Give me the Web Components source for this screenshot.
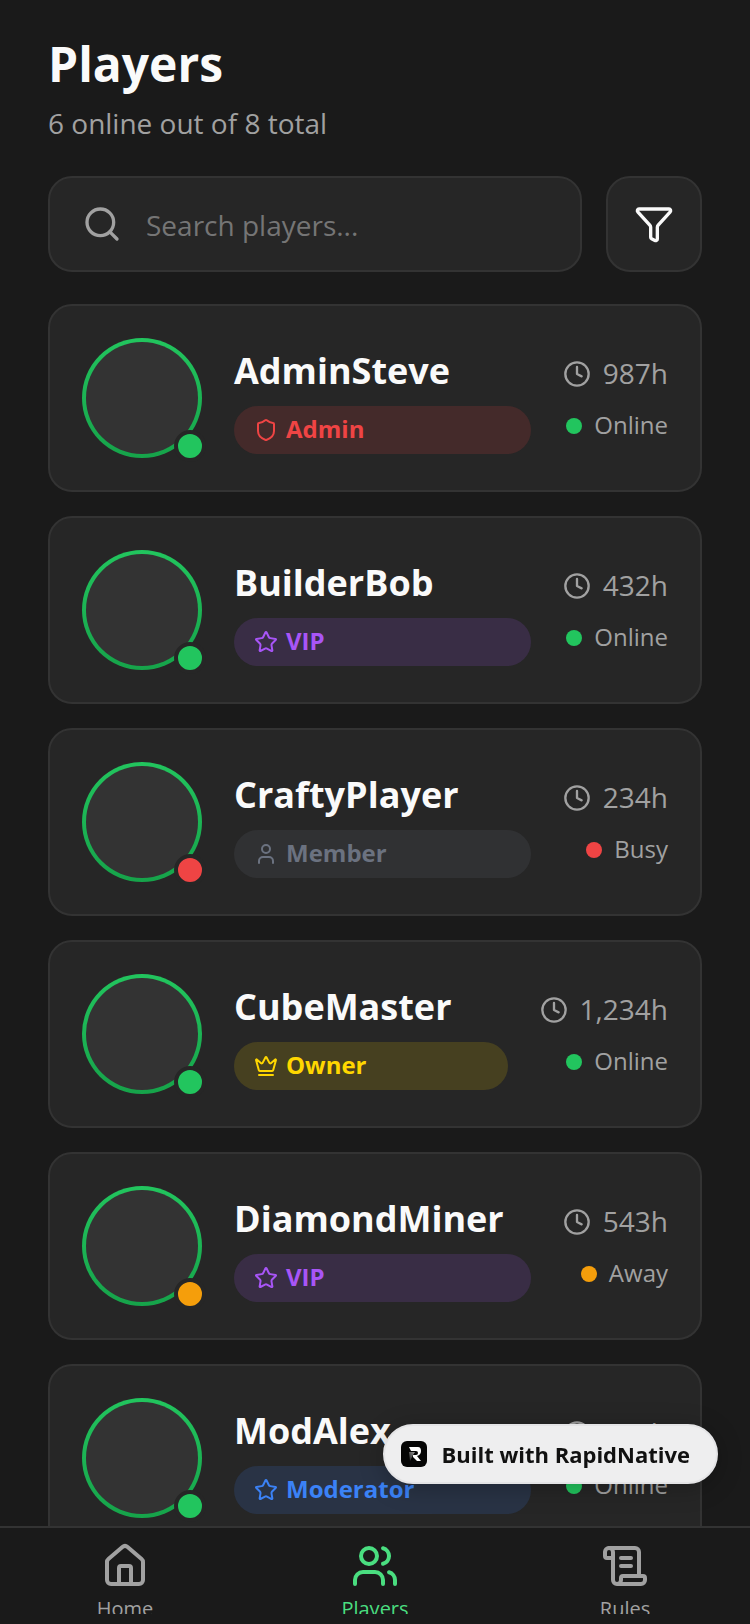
<!DOCTYPE html>
<html lang="en">
<head>
<meta charset="utf-8">
<meta name="viewport" content="width=device-width, initial-scale=1">
<title>Players</title>
<style>
    :root {
        --background: #1a1a1a;
        --card: #262626;
        --border: #333333;
        --foreground: #fafafa;
        --muted: #a1a1a1;
        --primary: #4ade80;
        --online: #22c55e;
        --busy: #ef4444;
        --away: #f59e0b;
    }

    body {
        margin: 0;
        background: var(--background);
        color: var(--foreground);
        font-family: "Open Sans", "Noto Sans", sans-serif;
    }
</style>
</head>
<body>
<players-screen>
    <player-card name="AdminSteve" role-name="Admin" hours="987h" status="online"></player-card>
    <player-card name="BuilderBob" role-name="VIP" hours="432h" status="online"></player-card>
    <player-card name="CraftyPlayer" role-name="Member" hours="234h" status="busy"></player-card>
    <player-card name="CubeMaster" role-name="Owner" hours="1,234h" status="online"></player-card>
    <player-card name="DiamondMiner" role-name="VIP" hours="543h" status="away"></player-card>
    <player-card name="ModAlex" role-name="Moderator" hours="756h" status="online"></player-card>

    <nav-tab slot="tabs" icon="home" href="#home">Home</nav-tab>
    <nav-tab slot="tabs" icon="users" href="#players" active>Players</nav-tab>
    <nav-tab slot="tabs" icon="scroll" href="#rules">Rules</nav-tab>
</players-screen>
<built-badge>Built with RapidNative</built-badge>

<script>
const ICONS = {
    search: `<circle cx="11" cy="11" r="8"/><path d="m21 21-4.3-4.3"/>`,
    filter: `<path d="M10 20a1 1 0 0 0 .553.895l2 1A1 1 0 0 0 14 21v-7a2 2 0 0 1 .517-1.341L21.74 4.67A1 1 0 0 0 21 3H3a1 1 0 0 0-.742 1.67l7.225 7.989A2 2 0 0 1 10 14z"/>`,
    clock: `<circle cx="12" cy="12" r="10"/><path d="M12 6v6l4 2"/>`,
    shield: `<path d="M20 13c0 5-3.5 7.5-7.66 8.95a1 1 0 0 1-.67-.01C7.5 20.5 4 18 4 13V6a1 1 0 0 1 1-1c2 0 4.5-1.2 6.24-2.72a1.17 1.17 0 0 1 1.52 0C14.51 3.81 17 5 19 5a1 1 0 0 1 1 1z"/>`,
    star: `<path d="M11.525 2.295a.53.53 0 0 1 .95 0l2.31 4.679a2.123 2.123 0 0 0 1.595 1.16l5.166.756a.53.53 0 0 1 .294.904l-3.736 3.638a2.123 2.123 0 0 0-.611 1.878l.882 5.14a.53.53 0 0 1-.771.56l-4.618-2.428a2.122 2.122 0 0 0-1.973 0L6.396 21.01a.53.53 0 0 1-.77-.56l.881-5.139a2.122 2.122 0 0 0-.611-1.879L2.16 9.795a.53.53 0 0 1 .294-.906l5.165-.755a2.122 2.122 0 0 0 1.597-1.16z"/>`,
    user: `<path d="M19 21v-2a4 4 0 0 0-4-4H9a4 4 0 0 0-4 4v2"/><circle cx="12" cy="7" r="4"/>`,
    crown: `<path d="M11.562 3.266a.5.5 0 0 1 .876 0L15.39 8.87a1 1 0 0 0 1.516.294L21.183 5.5a.5.5 0 0 1 .798.519l-2.834 10.246a1 1 0 0 1-.956.734H5.81a1 1 0 0 1-.957-.734L2.02 6.02a.5.5 0 0 1 .798-.519l4.276 3.664a1 1 0 0 0 1.516-.294z"/><path d="M5 21h14"/>`,
    home: `<path d="M15 21v-8a1 1 0 0 0-1-1h-4a1 1 0 0 0-1 1v8"/><path d="M3 10a2 2 0 0 1 .709-1.528l7-5.999a2 2 0 0 1 2.582 0l7 5.999A2 2 0 0 1 21 10v9a2 2 0 0 1-2 2H5a2 2 0 0 1-2-2z"/>`,
    users: `<path d="M16 21v-2a4 4 0 0 0-4-4H6a4 4 0 0 0-4 4v2"/><circle cx="9" cy="7" r="4"/><path d="M22 21v-2a4 4 0 0 0-3-3.87"/><path d="M16 3.13a4 4 0 0 1 0 7.75"/>`,
    scroll: `<path d="M15 12h-5"/><path d="M15 8h-5"/><path d="M19 17V5a2 2 0 0 0-2-2H4"/><path d="M8 21h12a2 2 0 0 0 2-2v-1a1 1 0 0 0-1-1H11a1 1 0 0 0-1 1v1a2 2 0 1 1-4 0V5a2 2 0 1 0-4 0v2a1 1 0 0 0 1 1h3"/>`
};

const ROLES = {
    Admin: {icon: "shield", color: "#ef4444"},
    VIP: {icon: "star", color: "#a855f7"},
    Member: {icon: "user", color: "#6b7280"},
    Owner: {icon: "crown", color: "#ffd700"},
    Moderator: {icon: "star", color: "#3b82f6"}
};

const STATUSES = {online: "Online", busy: "Busy", away: "Away"};

// Stroke icon, takes its colour from the text around it
class LineIcon extends HTMLElement {
    connectedCallback() {
        const shadow = this.attachShadow({mode: "open"});
        const size = this.getAttribute("size") || 24;

        shadow.innerHTML = `
            <style>
                :host {
                    display: block;
                    flex: none;
                }

                svg {
                    display: block;
                    fill: none;
                    stroke: currentColor;
                    stroke-width: 2;
                    stroke-linecap: round;
                    stroke-linejoin: round;
                }
            </style>

            <svg width="${size}" height="${size}" viewBox="0 0 24 24" aria-hidden="true">${ICONS[this.getAttribute("name")]}</svg>
        `;
    }
}

class SearchBar extends HTMLElement {
    connectedCallback() {
        const shadow = this.attachShadow({mode: "open"});

        shadow.innerHTML = `
            <style>
                :host {
                    display: flex;
                    gap: 24px;
                }

                .field, button {
                    box-sizing: border-box;
                    height: 96px;
                    background: var(--card);
                    border: 2px solid var(--border);
                    border-radius: 24px;
                }

                .field {
                    flex: 1;
                    display: flex;
                    align-items: center;
                    gap: 24px;
                    min-width: 0;
                    padding: 0 32px;
                    color: var(--muted);
                }

                input {
                    flex: 1;
                    min-width: 0;
                    padding: 2px 0 0;
                    border: 0;
                    outline: 0;
                    background: none;
                    color: var(--foreground);
                    font: 28px/40px "Open Sans", "Noto Sans", sans-serif;
                }

                input::placeholder {
                    color: #757575;
                }

                button {
                    flex: none;
                    display: flex;
                    align-items: center;
                    justify-content: center;
                    width: 96px;
                    padding: 0;
                    color: var(--foreground);
                }
            </style>

            <label class="field">
                <line-icon name="search" size="40"></line-icon>
                <input type="text" placeholder="Search players..." aria-label="Search players">
            </label>
            <button type="button" aria-label="Filter"><line-icon name="filter" size="40"></line-icon></button>
        `;
    }
}

class RoleBadge extends HTMLElement {
    connectedCallback() {
        const shadow = this.attachShadow({mode: "open"});
        const role = this.getAttribute("role-name");
        const {icon, color} = ROLES[role];

        shadow.innerHTML = `
            <style>
                :host {
                    display: flex;
                    align-items: center;
                    gap: 8px;
                    padding: 8px 20px;
                    border-radius: 24px;
                    background: ${color}26;
                    color: ${color};
                    font-size: 24px;
                    line-height: 30px;
                    font-weight: 700;
                }

                span {
                    padding-bottom: 2px;
                }
            </style>

            <line-icon name="${icon}" size="24"></line-icon>
            <span>${role}</span>
        `;
    }
}

class PlayerCard extends HTMLElement {
    connectedCallback() {
        const shadow = this.attachShadow({mode: "open"});
        const status = this.getAttribute("status");

        shadow.innerHTML = `
            <style>
                :host {
                    display: flex;
                    align-items: center;
                    gap: 32px;
                    padding: 32px;
                    background: var(--card);
                    border: 2px solid var(--border);
                    border-radius: 24px;
                    --status: var(--${status});
                }

                .avatar {
                    position: relative;
                    flex: none;
                    box-sizing: border-box;
                    width: 120px;
                    height: 120px;
                    padding: 4px;
                    border-radius: 50%;
                    background: linear-gradient(#22c55e, #16a34a);
                }

                .picture {
                    height: 100%;
                    border-radius: 50%;
                    background: var(--border);
                }

                .presence {
                    position: absolute;
                    right: -4px;
                    bottom: -4px;
                    width: 24px;
                    height: 24px;
                    border: 4px solid var(--card);
                    border-radius: 50%;
                    background: var(--status);
                }

                .info {
                    flex: 1;
                    min-width: 0;
                }

                h2 {
                    margin: 0 0 6px;
                    font-size: 36px;
                    line-height: 58px;
                    font-weight: 700;
                }

                .stats {
                    display: flex;
                    flex-direction: column;
                    align-items: flex-end;
                    gap: 16px;
                    color: var(--muted);
                }

                .stats div {
                    display: flex;
                    align-items: center;
                    gap: 12px;
                }

                .stats span {
                    padding-bottom: 2px;
                }

                .hours {
                    font-size: 28px;
                    line-height: 38px;
                }

                .status {
                    font-size: 24px;
                    line-height: 30px;
                }

                .dot {
                    width: 16px;
                    height: 16px;
                    border-radius: 50%;
                    background: var(--status);
                }
            </style>

            <div class="avatar">
                <div class="picture"></div>
                <div class="presence"></div>
            </div>
            <div class="info">
                <h2>${this.getAttribute("name")}</h2>
                <role-badge role-name="${this.getAttribute("role-name")}"></role-badge>
            </div>
            <div class="stats">
                <div class="hours"><line-icon name="clock" size="28"></line-icon><span>${this.getAttribute("hours")}</span></div>
                <div class="status"><i class="dot"></i><span>${STATUSES[status]}</span></div>
            </div>
        `;
    }
}

class NavTab extends HTMLElement {
    connectedCallback() {
        const shadow = this.attachShadow({mode: "open"});

        shadow.innerHTML = `
            <style>
                :host {
                    flex: 1;
                    color: var(--muted);
                }

                :host([active]) {
                    color: var(--primary);
                }

                a {
                    display: flex;
                    flex-direction: column;
                    align-items: center;
                    gap: 4px;
                    padding-top: 14px;
                    color: inherit;
                    font-size: 20px;
                    line-height: 30px;
                    text-decoration: none;
                }
            </style>

            <a href="${this.getAttribute("href")}">
                <line-icon name="${this.getAttribute("icon")}" size="48"></line-icon>
                <slot></slot>
            </a>
        `;
    }
}

class PlayersScreen extends HTMLElement {
    connectedCallback() {
        const shadow = this.attachShadow({mode: "open"});

        shadow.innerHTML = `
            <style>
                :host {
                    display: flex;
                    flex-direction: column;
                    height: 100vh;
                }

                main {
                    flex: 1;
                    min-height: 0;
                    overflow: hidden;
                    padding: 32px 48px 0;
                }

                h1 {
                    margin: 0 0 8px;
                    font-size: 48px;
                    line-height: 64px;
                    font-weight: 700;
                }

                p {
                    margin: 0 0 34px;
                    color: var(--muted);
                    font-size: 28px;
                    line-height: 38px;
                }

                .list {
                    display: flex;
                    flex-direction: column;
                    gap: 24px;
                    margin-top: 32px;
                }

                footer {
                    flex: none;
                    padding-bottom: 10px;
                    border-top: 2px solid var(--border);
                    background: var(--background);
                }

                nav {
                    display: flex;
                    height: 86px;
                    overflow: hidden;
                }
            </style>

            <main>
                <h1>Players</h1>
                <p>6 online out of 8 total</p>
                <search-bar></search-bar>
                <div class="list"><slot></slot></div>
            </main>
            <footer>
                <nav><slot name="tabs"></slot></nav>
            </footer>
        `;
    }
}

// Floating pill above the tab bar
class BuiltBadge extends HTMLElement {
    connectedCallback() {
        const shadow = this.attachShadow({mode: "open"});

        shadow.innerHTML = `
            <style>
                :host {
                    position: fixed;
                    right: 32px;
                    bottom: 140px;
                }

                a {
                    box-sizing: border-box;
                    display: flex;
                    align-items: center;
                    gap: 14px;
                    height: 60px;
                    padding: 0 26px 0 16px;
                    border: 2px solid #e4e4e6;
                    border-radius: 30px;
                    background: #eeeeef;
                    box-shadow: 0 4px 24px rgba(0, 0, 0, 0.25);
                    color: #111111;
                    font-size: 22px;
                    line-height: 32px;
                    font-weight: 700;
                    text-decoration: none;
                    white-space: nowrap;
                }

                svg {
                    flex: none;
                }
            </style>

            <a href="#rapidnative">
                <svg width="26" height="26" viewBox="0 0 26 26" aria-hidden="true">
                    <defs>
                        <linearGradient id="fade" x1="0" y1="1" x2="1" y2="0">
                            <stop offset="0" stop-color="#222"/>
                            <stop offset="1" stop-color="#999"/>
                        </linearGradient>
                    </defs>
                    <rect width="26" height="26" rx="6" fill="#050505"/>
                    <path d="M8 11h6l-2 3-3 6z" fill="url(#fade)"/>
                    <path d="M8 6h9q3 0 3 4t-4 5l4 5h-4l-4-4v-2h3q2 0 2-2t-2-2H10z" fill="#fff"/>
                </svg>
                <slot></slot>
            </a>
        `;
    }
}

customElements.define("line-icon", LineIcon);
customElements.define("search-bar", SearchBar);
customElements.define("role-badge", RoleBadge);
customElements.define("player-card", PlayerCard);
customElements.define("nav-tab", NavTab);
customElements.define("players-screen", PlayersScreen);
customElements.define("built-badge", BuiltBadge);
</script>
</body>
</html>
